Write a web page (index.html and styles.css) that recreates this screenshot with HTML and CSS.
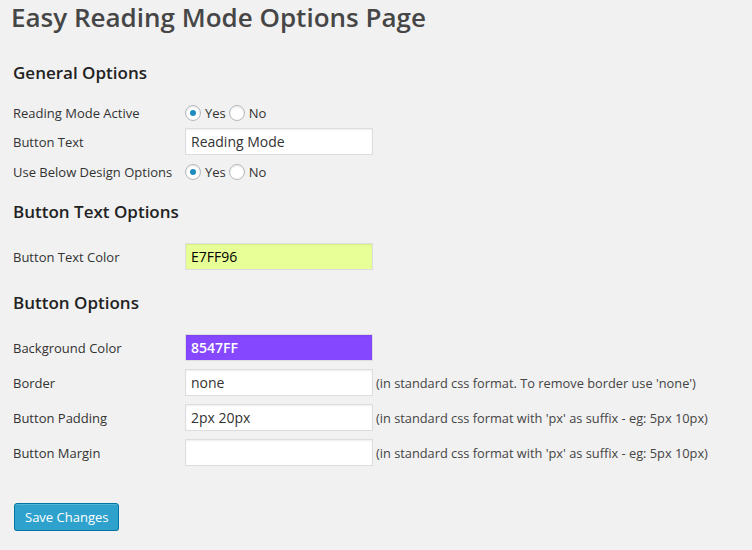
FILE: index.html
```html
<!DOCTYPE html>
<html>
<head>
<meta charset="utf-8">
<link rel="stylesheet" href="styles.css">
</head>
<body>
<div class="wrap">
  <h1 class="page-title">Easy Reading Mode Options Page</h1>

  <h3 class="section-title first">General Options</h3>
  <div class="row row-radio r1">
    <div class="label">Reading Mode Active</div>
    <div class="field">
      <span class="radio checked"></span><span class="opt">Yes</span>
      <span class="radio"></span><span class="opt">No</span>
    </div>
  </div>
  <div class="row r2">
    <div class="label">Button Text</div>
    <div class="field"><input class="text" type="text" value="Reading Mode"></div>
  </div>
  <div class="row row-radio r3">
    <div class="label">Use Below Design Options</div>
    <div class="field">
      <span class="radio checked"></span><span class="opt">Yes</span>
      <span class="radio"></span><span class="opt">No</span>
    </div>
  </div>

  <h3 class="section-title">Button Text Options</h3>
  <div class="row first-row">
    <div class="label">Button Text Color</div>
    <div class="field"><input class="text color-light" type="text" value="E7FF96"></div>
  </div>

  <h3 class="section-title s3">Button Options</h3>
  <div class="row first-row">
    <div class="label">Background Color</div>
    <div class="field"><input class="text color-dark" type="text" value="8547FF"></div>
  </div>
  <div class="row next-row">
    <div class="label">Border</div>
    <div class="field"><input class="text" type="text" value="none"><span class="desc">(in standard css format. To remove border use 'none')</span></div>
  </div>
  <div class="row next-row">
    <div class="label">Button Padding</div>
    <div class="field"><input class="text" type="text" value="2px 20px"><span class="desc">(in standard css format with 'px' as suffix - eg: 5px 10px)</span></div>
  </div>
  <div class="row next-row">
    <div class="label">Button Margin</div>
    <div class="field"><input class="text" type="text" value=""><span class="desc">(in standard css format with 'px' as suffix - eg: 5px 10px)</span></div>
  </div>

  <div class="submit"><button class="button-primary" type="button">Save Changes</button></div>
</div>
</body>
</html>
```

FILE: styles.css
```css
html, body {
  margin: 0;
  padding: 0;
  background: #f1f1f1;
}
body {
  font-family: "Open Sans", "Liberation Sans", sans-serif;
  font-size: 13px;
  color: #444;
}
.wrap {
  padding: 0 0 0 13px;
  display: flex;
  flex-direction: column;
  align-items: flex-start;
}
.page-title {
  margin: 0 0 0 -2px;
  font-size: 26px;
  font-weight: 600;
  line-height: 34px;
  color: #464646;
}
.section-title {
  margin: 14px 0 0 0;
  font-size: 17px;
  font-weight: 600;
  line-height: 24px;
  color: #222;
}
.section-title.first { margin-top: 27px; }
.section-title.s3 { margin-top: 21px; }
.row {
  display: flex;
  align-items: center;
  height: 27px;
}
.row-radio { height: 28px; }
.r1 { margin-top: 14px; }
.r2 { margin-top: 1px; }
.r3 { margin-top: 3px; }
.first-row { margin-top: 19px; }
.next-row { margin-top: 8px; }
.label {
  width: 172px;
  flex: none;
  color: #333;
}
.field {
  display: flex;
  align-items: center;
}
.text {
  box-sizing: border-box;
  width: 188px;
  height: 27px;
  margin: 0;
  padding: 0 5px;
  border: 1px solid #ddd;
  background: #fff;
  box-shadow: inset 0 1px 2px rgba(0,0,0,.07);
  font-family: "Open Sans", "Liberation Sans", sans-serif;
  font-size: 14px;
  color: #333;
  outline: none;
}
.color-light {
  background: #e7ff96;
  color: #000;
}
.color-dark {
  background: #8547ff;
  color: #fff;
  font-weight: 600;
}
.desc {
  margin-left: 3px;
  font-size: 12.8px;
  color: #444;
}
.radio {
  box-sizing: border-box;
  width: 16px;
  height: 16px;
  border: 1px solid #b4b9be;
  border-radius: 50%;
  background: #fff;
  box-shadow: inset 0 1px 2px rgba(0,0,0,.1);
  display: flex;
  align-items: center;
  justify-content: center;
  flex: none;
}
.radio.checked::before {
  content: "";
  width: 6px;
  height: 6px;
  border-radius: 50%;
  background: #1e8cbe;
}
.opt {
  margin: 0 3px 0 4px;
  font-size: 13px;
  color: #333;
}
.submit {
  margin-top: 37px;
  margin-left: 1px;
}
.button-primary {
  box-sizing: border-box;
  height: 28px;
  padding: 0 10px 1px;
  border: 1px solid #0074a2;
  border-radius: 3px;
  background: #2ea2cc;
  box-shadow: inset 0 1px 0 rgba(120,200,230,.5), 0 1px 0 rgba(0,0,0,.15);
  color: #fff;
  font-family: "Open Sans", "Liberation Sans", sans-serif;
  font-size: 13px;
  line-height: 26px;
  cursor: pointer;
}
```
